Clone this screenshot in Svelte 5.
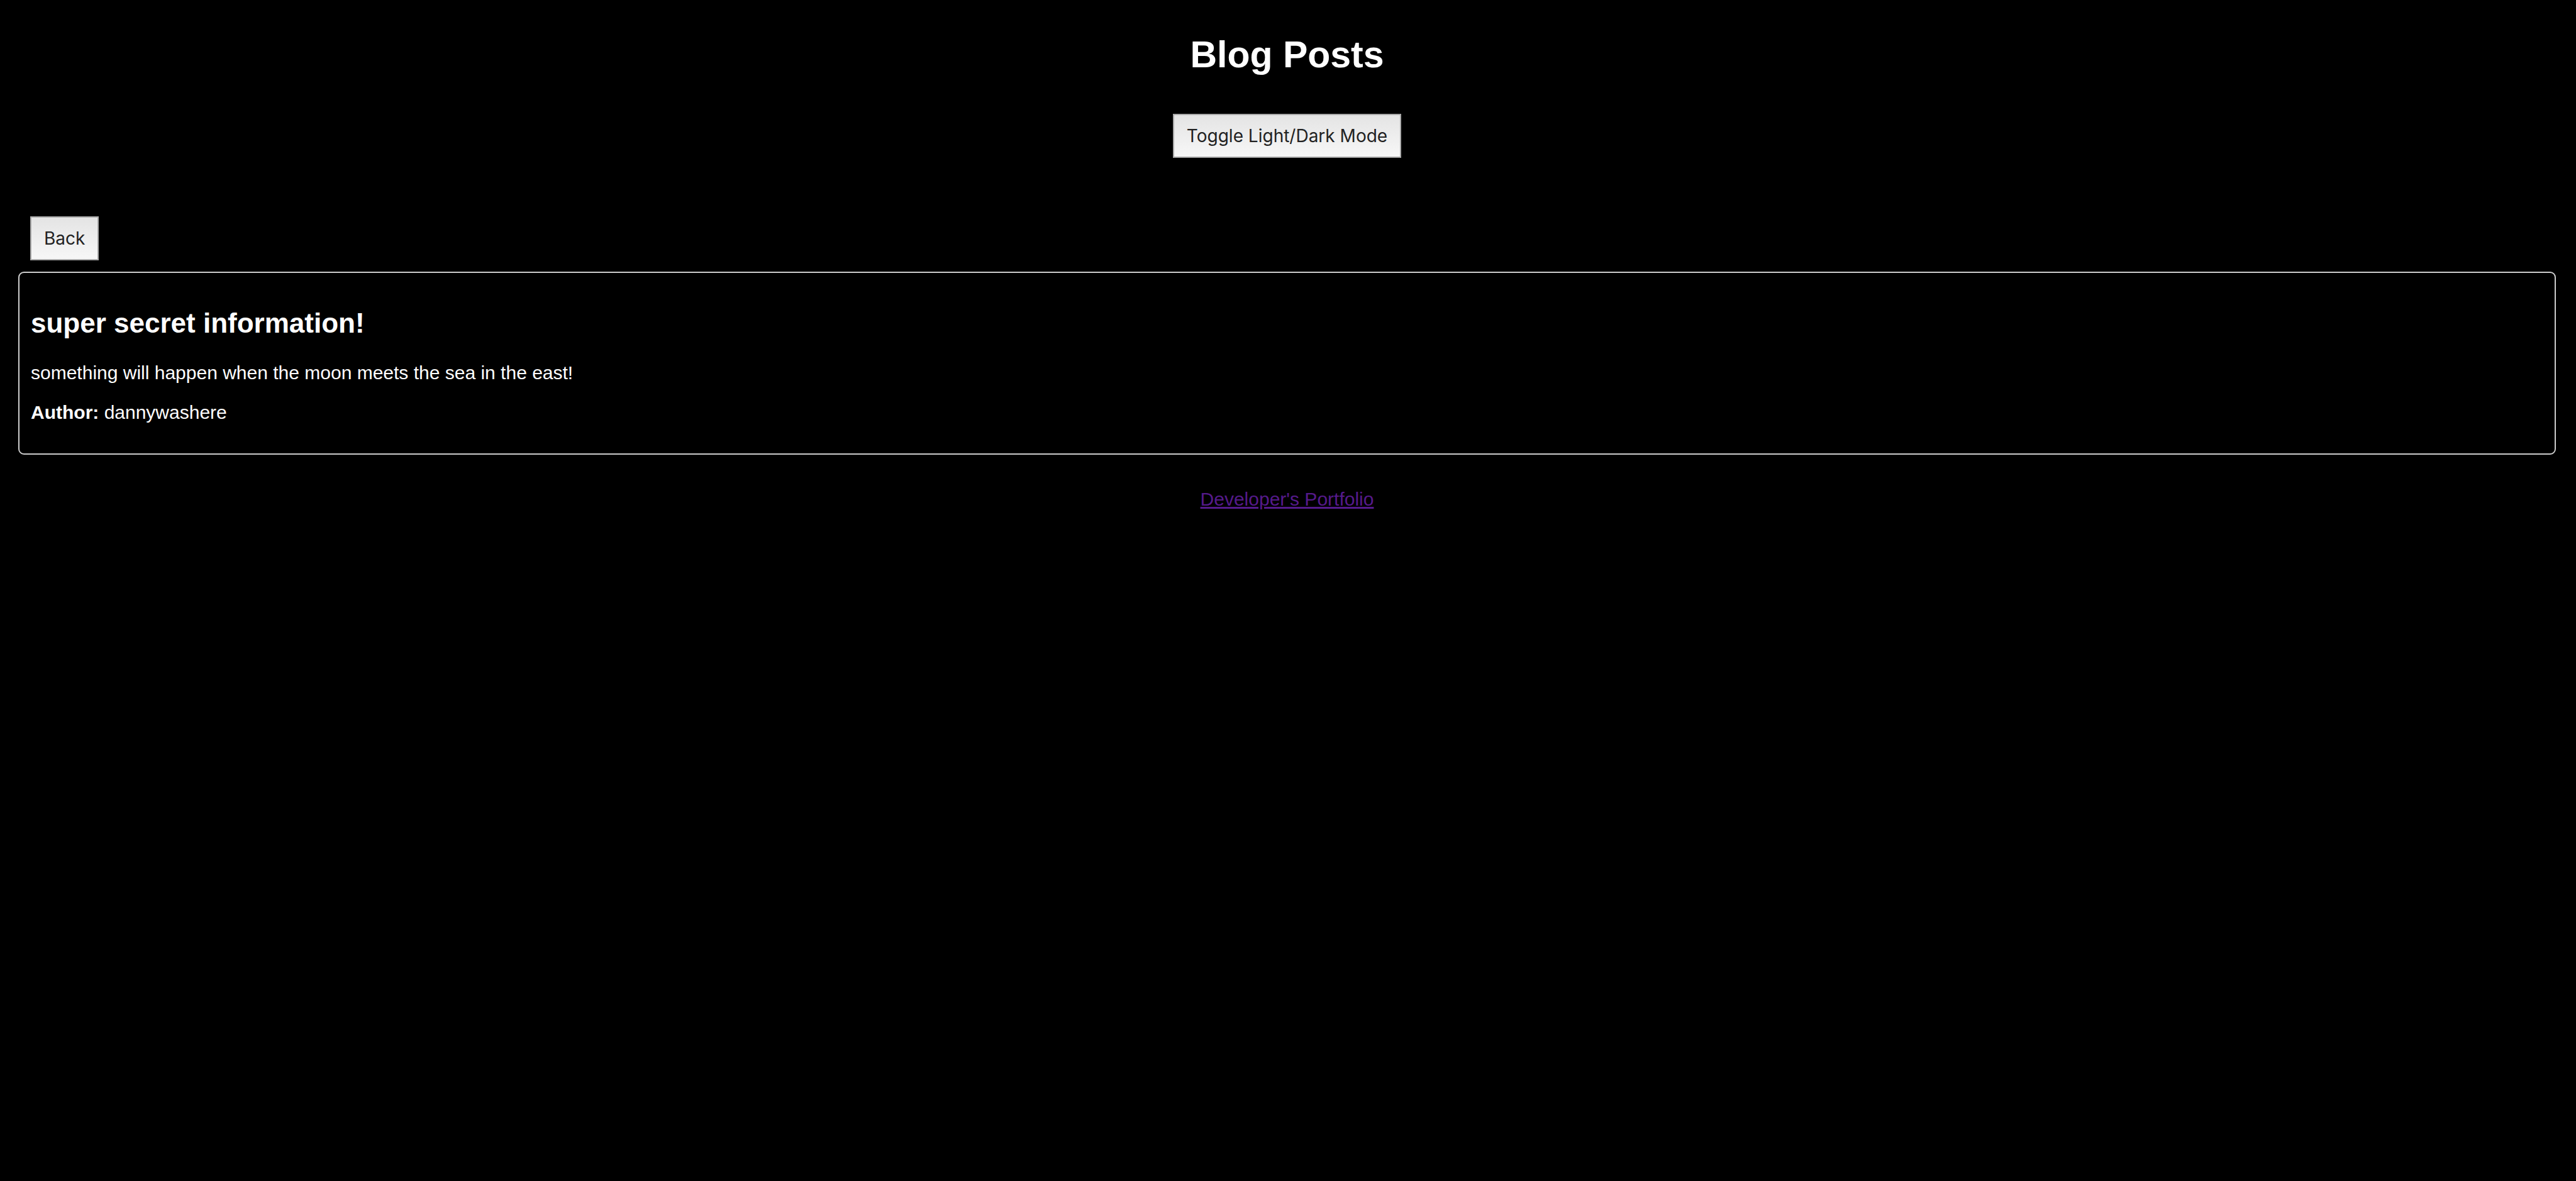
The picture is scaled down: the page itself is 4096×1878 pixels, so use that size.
<script>
  let dark = $state(true);
  const post = {
    title: 'super secret information!',
    body: 'something will happen when the moon meets the sea in the east!',
    author: 'dannywashere'
  };
</script>

<div class="page" class:dark>
  <header>
    <h1>Blog Posts</h1>
    <button type="button" onclick={() => (dark = !dark)}>Toggle Light/Dark Mode</button>
  </header>

  <main>
    <nav>
      <button type="button" onclick={() => history.back()}>Back</button>
    </nav>
    <article>
      <h2>{post.title}</h2>
      <p>{post.body}</p>
      <p><strong>Author:</strong> {post.author}</p>
    </article>
  </main>

  <footer>
    <a href="#portfolio">Developer's Portfolio</a>
  </footer>
</div>

<style>
  .page {
    box-sizing: border-box;
    min-height: 100vh;
    padding: 54px 32px 30px 29px;
    background: #fff;
    color: #000;
    font-family: "Liberation Sans", Arial, sans-serif;
    font-size: 30px;
    line-height: 34px;
  }

  .page.dark {
    background: #000;
    color: #fff;
  }

  header {
    display: flex;
    flex-direction: column;
    align-items: center;
    gap: 61px;
  }

  h1 {
    margin: 0;
    font-size: 59px;
    line-height: 66px;
  }

  button {
    padding: 16px 20px;
    border: 2px solid #a9a9a9;
    border-radius: 0;
    background: linear-gradient(#e4e4e4, #f7f7f7);
    color: #222;
    font-family: Inter, sans-serif;
    font-size: 28px;
    line-height: 34px;
    cursor: pointer;
  }

  main {
    padding-top: 93px;
  }

  nav {
    display: flex;
    padding: 0 19px 18px;
  }

  article {
    padding: 18px 18px 48px;
    border: 2px solid #ccc;
    border-radius: 9px;
  }

  h2 {
    margin: 37px 0;
    font-size: 44px;
    line-height: 50px;
  }

  p {
    margin: 0;
  }

  p + p {
    margin-top: 29px;
  }

  footer {
    padding-top: 54px;
    text-align: center;
  }

  a {
    color: #551a8b;
  }
</style>
